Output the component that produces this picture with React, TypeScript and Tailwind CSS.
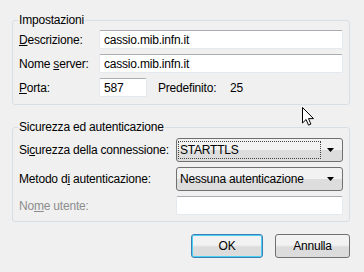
const FONT = { fontFamily: '"Liberation Sans", Arial, sans-serif' }

function TextBox({ value, className = '' }: { value?: string; className?: string }) {
  return (
    <div
      className={`flex h-[19px] items-center rounded-[2px] border border-[#e3e9ef] border-t-[#abadb3] bg-white pl-[4px] text-[12px] text-black ${className}`}
    >
      {value}
    </div>
  )
}

function Combo({ value, focused }: { value: string; focused?: boolean }) {
  return (
    <div className="flex h-[24px] w-[167px] items-center rounded-[3px] border border-[#707070] bg-gradient-to-b from-[#f2f2f2] from-50% to-[#dddddd] to-50% pl-[1px] pr-[8px]">
      <div
        className={`flex h-[18px] flex-1 items-center pl-[1px] text-[12px] text-black ${
          focused ? 'border border-dotted border-[#444]' : 'border border-transparent'
        }`}
      >
        {value}
      </div>
      <svg width="7" height="4" viewBox="0 0 7 4" className="ml-[6px]">
        <path d="M0 0h7L3.5 4z" fill="#000" />
      </svg>
    </div>
  )
}

function Btn({ label, primary, w }: { label: string; primary?: boolean; w: string }) {
  return (
    <div
      className={`flex h-[24px] ${w} items-center justify-center rounded-[3px] border bg-gradient-to-b from-[#f2f2f2] from-45% to-[#dcdcdc] to-55% text-[12px] text-black ${
        primary ? 'border-[#3c7fb1] shadow-[inset_0_0_0_1px_#48d0f6]' : 'border-[#707070]'
      }`}
    >
      {label}
    </div>
  )
}

export default function App() {
  return (
    <div
      className="relative h-[272px] w-[364px] bg-[#f0f0f0] text-[12px] tracking-[-0.2px] text-black"
      style={FONT}
    >
      <div className="pl-[12px] pr-[14px] pt-[12px]">
        <fieldset className="rounded-[3px] border border-[#d5dfe5] px-[6px] pb-[7px] pt-[2px]">
          <legend className="-ml-[1px] px-[1px] leading-[16px]">Impostazioni</legend>
          <div className="flex flex-col gap-[5px]">
            <div className="flex items-center">
              <span className="w-[80px]">
                <u>D</u>escrizione:
              </span>
              <TextBox value="cassio.mib.infn.it" className="flex-1" />
            </div>
            <div className="flex items-center">
              <span className="w-[80px]">
                Nome <u>s</u>erver:
              </span>
              <TextBox value="cassio.mib.infn.it" className="flex-1" />
            </div>
            <div className="flex items-center">
              <span className="w-[80px]">
                <u>P</u>orta:
              </span>
              <TextBox value="587" className="w-[48px]" />
              <span className="ml-[11px] w-[72px]">Predefinito:</span>
              <span>25</span>
            </div>
          </div>
        </fieldset>

        <fieldset className="mt-[14px] rounded-[3px] border border-[#d5dfe5] px-[6px] pb-[6px] pt-[3px]">
          <legend className="-ml-[1px] px-[1px] leading-[16px]">Sicurezza ed autenticazione</legend>
          <div className="flex flex-col gap-[5px]">
            <div className="flex items-center justify-between">
              <span>
                Si<u>c</u>urezza della connessione:
              </span>
              <Combo value="STARTTLS" focused />
            </div>
            <div className="flex items-center justify-between">
              <span>
                Metodo d<u>i</u> autenticazione:
              </span>
              <Combo value="Nessuna autenticazione" />
            </div>
            <div className="flex items-center justify-between">
              <span className="text-[#8d8d8d]">
                No<u>m</u>e utente:
              </span>
              <TextBox className="w-[167px]" />
            </div>
          </div>
        </fieldset>

        <div className="mt-[12px] flex justify-end gap-[12px]">
          <Btn label="OK" primary w="w-[72px]" />
          <Btn label="Annulla" w="w-[75px]" />
        </div>
      </div>

      {/* mouse pointer */}
      <svg width="12" height="19" viewBox="0 0 12 19" className="absolute left-[302px] top-[107px]">
        <path
          d="M0.5 0.5v15.5l3.6-3.5 2.4 5.6 2.4-1-2.4-5.5h5z"
          fill="#fff"
          stroke="#000"
          strokeWidth="1"
          strokeLinejoin="miter"
        />
      </svg>
    </div>
  )
}
